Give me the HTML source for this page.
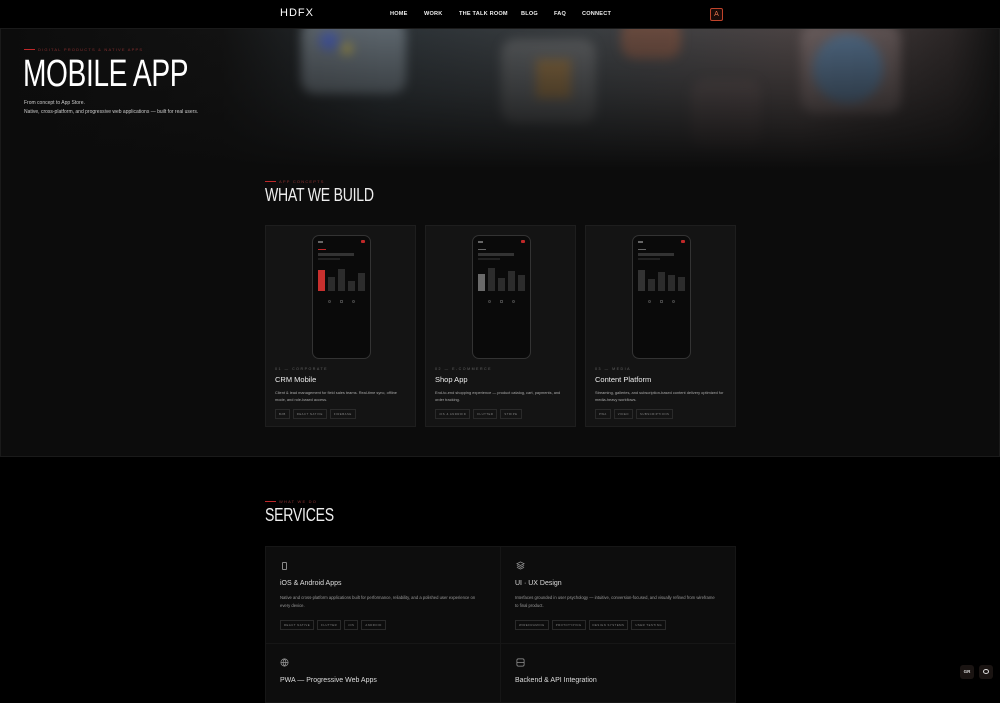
<!DOCTYPE html>
<html><head><meta charset="utf-8"><style>
*{margin:0;padding:0;box-sizing:border-box}
body{width:1000px;height:684px;overflow:hidden;background:#000;font-family:"Liberation Sans",sans-serif;color:#ddd;position:relative}
.a{position:absolute}
.nav{top:0;left:0;width:1000px;height:28px;background:#000;z-index:5}
.nav span{position:absolute;top:11px;font-size:5.6px;font-weight:bold;color:#eee;letter-spacing:.2px}
.sec1{top:28px;left:0;width:1000px;height:429px;background:#0c0c0c;border:1px solid #1a1a1a;overflow:hidden}
.hero{top:0;left:0;width:1000px;height:140px;background:linear-gradient(90deg,#0c0c0c 0,#121212 220px,#2a3034 380px,#3a3d40 600px,#4a4242 800px,#2b2626 950px,#111 1000px)}
.fade{top:0;left:0;width:1000px;height:140px;background:linear-gradient(180deg,rgba(12,12,12,0) 0,rgba(12,12,12,.4) 45%,#0c0c0c 100%)}
.blur{filter:blur(5px)}
.ic{position:absolute;border-radius:14px;opacity:.5}
.lbl{font-size:4px;letter-spacing:1.2px;color:#8a3030;padding-left:14px;position:absolute}
.lbl:before{content:"";position:absolute;left:0;top:1.5px;width:11px;height:1px;background:#c0282a}
.h1{font-size:38px;color:#fff;letter-spacing:-.5px;transform:scaleX(.74);transform-origin:left}
.h2{font-size:18px;color:#eee;letter-spacing:-.3px;transform:scaleX(.78);transform-origin:left}
.card{width:151px;height:202px;background:#141414;border:1px solid #1e1e1e}
.ph{position:absolute;left:46px;top:9px;width:59px;height:124px;border:1px solid #333;border-radius:7px;background:#0a0a0a}
.ph i{position:absolute;display:block}
.meta{position:absolute;left:9px;top:141px;font-size:3.6px;letter-spacing:1.5px;color:#666}
.t{position:absolute;left:9px;top:149px;font-size:7.5px;color:#eee}
.d{position:absolute;left:9px;top:163px;width:132px;font-size:3.9px;line-height:7px;color:#aaa}
.tags{position:absolute;left:9px;top:183px;display:flex;gap:3px}
.tags b{font-weight:normal;font-size:2.8px;letter-spacing:.5px;color:#888;border:1px solid #2a2a2a;padding:2px 3px}
.sv{background:#0d0d0d;border:1px solid #161616}
.sv .st{position:absolute;left:14px;font-size:7px;color:#ddd}
.sv .sd{position:absolute;left:14px;width:200px;font-size:4.2px;line-height:8px;color:#999}
.sv .tags{left:14px}
</style></head><body>
<div class="a nav">
 <div class="a" style="left:280px;top:7px;font-size:11px;color:#fff;letter-spacing:1px">HDFX</div>
 <span style="left:390px">HOME</span><span style="left:424px">WORK</span><span style="left:459px">THE TALK ROOM</span><span style="left:521px">BLOG</span><span style="left:554px">FAQ</span><span style="left:582px">CONNECT</span>
 <div class="a" style="left:710px;top:8px;width:13px;height:13px;border:1px solid #c0432a;border-radius:2px;background:#1a0a08;color:#e8744e;font-size:7px;text-align:center;line-height:11px">A</div>
</div>
<div class="a sec1">
 <div class="a hero"></div>
 <div class="blur">
 <div class="ic" style="left:300px;top:-10px;width:105px;height:75px;background:#8e9aa3"></div>
 <div class="a" style="left:318px;top:2px;width:20px;height:20px;border-radius:50%;background:#3b4fa8;opacity:.7"></div>
 <div class="a" style="left:340px;top:14px;width:12px;height:12px;border-radius:50%;background:#b8a030;opacity:.6"></div>
 <div class="ic" style="left:500px;top:10px;width:95px;height:85px;background:#8a8a8a;opacity:.35"></div>
 <div class="a" style="left:535px;top:30px;width:35px;height:40px;background:#a06a20;opacity:.5"></div>
 <div class="ic" style="left:620px;top:-10px;width:60px;height:40px;background:#a65a3a;opacity:.4"></div>
 <div class="ic" style="left:800px;top:-5px;width:100px;height:90px;background:#9d8a8a;opacity:.35"></div>
 <div class="a" style="left:812px;top:5px;width:70px;height:70px;border-radius:50%;background:#3e6e97;opacity:.6"></div>
 <div class="ic" style="left:690px;top:50px;width:70px;height:70px;background:#6c5a5a;opacity:.3"></div>
 </div>
 <div class="a fade"></div>
 <div class="lbl" style="left:23px;top:18px">DIGITAL PRODUCTS &amp; NATIVE APPS</div>
 <div class="a h1" style="left:22px;top:24px">MOBILE APP</div>
 <div class="a" style="left:23px;top:70px;font-size:5px;line-height:9px;color:#ccc">From concept to App Store.<br>Native, cross-platform, and progressive web applications — built for real users.</div>
 <div class="lbl" style="left:264px;top:150px">APP CONCEPTS</div>
 <div class="a h2" style="left:264px;top:156px">WHAT WE BUILD</div>

 <div class="a card" style="left:264px;top:196px">
  <div class="ph"><i style="left:5px;top:5px;width:5px;height:1.5px;background:#666"></i><i style="right:5px;top:4px;width:4px;height:3px;background:#c02828;border-radius:1px"></i><i style="left:5px;top:13px;width:8px;height:1px;background:#c02828"></i><i style="left:5px;top:17px;width:36px;height:3px;background:#333"></i><i style="left:5px;top:22px;width:22px;height:1.5px;background:#222"></i>
  <i style="left:5px;top:34px;width:7px;height:21px;background:#c8302e"></i><i style="left:15px;top:41px;width:7px;height:14px;background:#2c2c2c"></i><i style="left:25px;top:33px;width:7px;height:22px;background:#2c2c2c"></i><i style="left:35px;top:45px;width:7px;height:10px;background:#2c2c2c"></i><i style="left:45px;top:37px;width:7px;height:18px;background:#2c2c2c"></i>
  <i style="left:15px;top:64px;width:3px;height:3px;border:1px solid #444;border-radius:50%"></i><i style="left:27px;top:64px;width:3px;height:3px;border:1px solid #444"></i><i style="left:39px;top:64px;width:3px;height:3px;border:1px solid #444;border-radius:50%"></i></div>
  <div class="meta">01 — CORPORATE</div><div class="t">CRM Mobile</div>
  <div class="d">Client &amp; lead management for field sales teams. Real-time sync, offline mode, and role-based access.</div>
  <div class="tags"><b>B2B</b><b>REACT NATIVE</b><b>FIREBASE</b></div>
 </div>
 <div class="a card" style="left:424px;top:196px">
  <div class="ph"><i style="left:5px;top:5px;width:5px;height:1.5px;background:#666"></i><i style="right:5px;top:4px;width:4px;height:3px;background:#c02828;border-radius:1px"></i><i style="left:5px;top:13px;width:8px;height:1px;background:#666"></i><i style="left:5px;top:17px;width:36px;height:3px;background:#333"></i><i style="left:5px;top:22px;width:22px;height:1.5px;background:#222"></i>
  <i style="left:5px;top:38px;width:7px;height:17px;background:#6a6a6a"></i><i style="left:15px;top:32px;width:7px;height:23px;background:#2c2c2c"></i><i style="left:25px;top:42px;width:7px;height:13px;background:#2c2c2c"></i><i style="left:35px;top:35px;width:7px;height:20px;background:#2c2c2c"></i><i style="left:45px;top:39px;width:7px;height:16px;background:#2c2c2c"></i>
  <i style="left:15px;top:64px;width:3px;height:3px;border:1px solid #444;border-radius:50%"></i><i style="left:27px;top:64px;width:3px;height:3px;border:1px solid #444"></i><i style="left:39px;top:64px;width:3px;height:3px;border:1px solid #444;border-radius:50%"></i></div>
  <div class="meta">02 — E-COMMERCE</div><div class="t">Shop App</div>
  <div class="d">End-to-end shopping experience — product catalog, cart, payments, and order tracking.</div>
  <div class="tags"><b>iOS &amp; ANDROID</b><b>FLUTTER</b><b>STRIPE</b></div>
 </div>
 <div class="a card" style="left:584px;top:196px">
  <div class="ph"><i style="left:5px;top:5px;width:5px;height:1.5px;background:#666"></i><i style="right:5px;top:4px;width:4px;height:3px;background:#c02828;border-radius:1px"></i><i style="left:5px;top:13px;width:8px;height:1px;background:#666"></i><i style="left:5px;top:17px;width:36px;height:3px;background:#333"></i><i style="left:5px;top:22px;width:22px;height:1.5px;background:#222"></i>
  <i style="left:5px;top:34px;width:7px;height:21px;background:#333"></i><i style="left:15px;top:43px;width:7px;height:12px;background:#2c2c2c"></i><i style="left:25px;top:36px;width:7px;height:19px;background:#2c2c2c"></i><i style="left:35px;top:39px;width:7px;height:16px;background:#2c2c2c"></i><i style="left:45px;top:41px;width:7px;height:14px;background:#2c2c2c"></i>
  <i style="left:15px;top:64px;width:3px;height:3px;border:1px solid #444;border-radius:50%"></i><i style="left:27px;top:64px;width:3px;height:3px;border:1px solid #444"></i><i style="left:39px;top:64px;width:3px;height:3px;border:1px solid #444;border-radius:50%"></i></div>
  <div class="meta">03 — MEDIA</div><div class="t">Content Platform</div>
  <div class="d">Streaming, galleries, and subscription-based content delivery optimized for media-heavy workflows.</div>
  <div class="tags"><b>PWA</b><b>VIDEO</b><b>SUBSCRIPTIONS</b></div>
 </div>
</div>

<div class="lbl" style="left:265px;top:499px">WHAT WE DO</div>
<div class="a h2" style="left:265px;top:505px">SERVICES</div>

<div class="a sv" style="left:265px;top:546px;width:236px;height:98px">
 <div class="a" style="left:16px;top:15px;width:5px;height:8px;border:1px solid #888;border-radius:1px"></div>
 <div class="st" style="top:33px">iOS &amp; Android Apps</div>
 <div class="sd" style="top:47px">Native and cross-platform applications built for performance, reliability, and a polished user experience on every device.</div>
 <div class="tags" style="top:73px"><b>REACT NATIVE</b><b>FLUTTER</b><b>iOS</b><b>ANDROID</b></div>
</div>
<div class="a sv" style="left:500px;top:546px;width:236px;height:98px">
 <svg class="a" style="left:15px;top:14px" width="9" height="9" viewBox="0 0 10 10" fill="none" stroke="#999" stroke-width=".8"><path d="M5 1L9 3 5 5 1 3Z M1 5L5 7 9 5 M1 7L5 9 9 7"/></svg>
 <div class="st" style="top:33px">UI · UX Design</div>
 <div class="sd" style="top:47px">Interfaces grounded in user psychology — intuitive, conversion-focused, and visually refined from wireframe to final product.</div>
 <div class="tags" style="top:73px"><b>WIREFRAMING</b><b>PROTOTYPING</b><b>DESIGN SYSTEMS</b><b>USER TESTING</b></div>
</div>
<div class="a sv" style="left:265px;top:643px;width:236px;height:60px">
 <svg class="a" style="left:14px;top:14px" width="9" height="9" viewBox="0 0 10 10" fill="none" stroke="#999" stroke-width=".8"><circle cx="5" cy="5" r="4"/><path d="M1 5H9M5 1C3 3.5 3 6.5 5 9M5 1C7 3.5 7 6.5 5 9"/></svg>
 <div class="st" style="top:33px">PWA — Progressive Web Apps</div>
</div>
<div class="a sv" style="left:500px;top:643px;width:236px;height:60px">
 <svg class="a" style="left:15px;top:14px" width="9" height="9" viewBox="0 0 10 10" fill="none" stroke="#999" stroke-width=".8"><rect x="1" y="1" width="8" height="8" rx="1.5"/><path d="M1 5H9"/></svg>
 <div class="st" style="top:33px">Backend &amp; API Integration</div>
</div>

<div class="a" style="left:960px;top:665px;width:14px;height:14px;background:#1a1412;border-radius:3px;font-size:4.5px;font-weight:bold;color:#ddd;text-align:center;line-height:14px">GR</div>
<div class="a" style="left:979px;top:665px;width:14px;height:14px;background:#1a1412;border-radius:3px"><div class="a" style="left:4px;top:4px;width:6px;height:5px;border:1px solid #ddd;border-radius:50%"></div></div>
</body></html>
